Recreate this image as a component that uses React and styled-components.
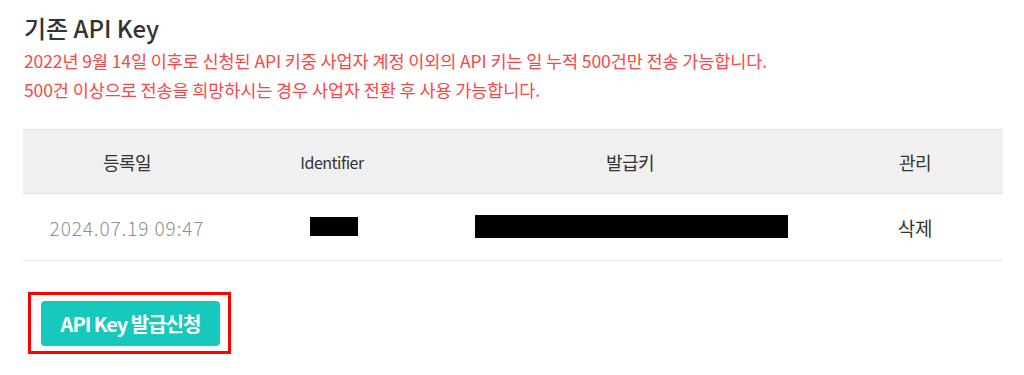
import React from 'react'
import styled, { createGlobalStyle } from 'styled-components'

const GlobalStyle = createGlobalStyle`
  body {
    margin: 0;
    background: #fff;
    font-family: "Noto Sans CJK KR", "Noto Sans", sans-serif;
  }
`

const Wrapper = styled.div`
  width: 980px;
  padding: 12px 0 0 23px;
`

const Title = styled.h2`
  margin: 0 0 0 1px;
  font-size: 24px;
  font-weight: 500;
  line-height: 32px;
  color: #333;
  letter-spacing: 0;
`

const Notice = styled.p`
  margin: 2px 0 0 1px;
  font-size: 17.5px;
  line-height: 29px;
  color: #fa4646;
  letter-spacing: -0.1px;
`

const Table = styled.table`
  width: 980px;
  margin-top: 25px;
  border-collapse: collapse;
  table-layout: fixed;
`

const HeadCell = styled.th`
  width: ${p => p.$w}px;
  height: 63px;
  padding: 0;
  background: #f0f0f0;
  border-top: 1px solid #e4e4e4;
  border-bottom: 1px solid #e4e4e4;
  font-size: ${p => (p.$latin ? 16 : 18)}px;
  font-weight: 400;
  color: #333;
  letter-spacing: -0.5px;
`

const Cell = styled.td`
  height: 66px;
  padding: 0;
  text-align: center;
  border-bottom: 1px solid #e4e4e4;
  font-size: 19px;
  font-weight: ${p => (p.$muted ? 300 : 400)};
  color: ${p => (p.$muted ? '#8f8f8f' : '#333')};
  letter-spacing: ${p => (p.$muted ? '0.9px' : '-0.3px')};
`

const Mask = styled.div`
  width: ${p => p.$w}px;
  height: ${p => p.$h}px;
  margin: -1px auto 0;
  background: #000;
  transform: translateX(${p => p.$shift || 0}px);
`

const Highlight = styled.div`
  display: inline-block;
  margin: 31px 0 0 5px;
  padding: 6px 8px 5px 10px;
  border: 3px solid #ff0000;
`

const IssueButton = styled.button`
  width: 179px;
  height: 45px;
  border: none;
  border-radius: 4px;
  background: #17c9bd;
  color: #fff;
  font-family: inherit;
  font-size: 20px;
  font-weight: 700;
  letter-spacing: -1px;
  cursor: pointer;
`

export default function App() {
  return (
    <>
      <GlobalStyle />
      <Wrapper>
        <Title>기존 API Key</Title>
        <Notice>
          2022년 9월 14일 이후로 신청된 API 키중 사업자 계정 이외의 API 키는 일 누적 500건만 전송 가능합니다.
          <br />
          500건 이상으로 전송을 희망하시는 경우 사업자 전환 후 사용 가능합니다.
        </Notice>
        <Table>
          <thead>
            <tr>
              <HeadCell $w={208}>등록일</HeadCell>
              <HeadCell $w={202} $latin>Identifier</HeadCell>
              <HeadCell $w={394}>발급키</HeadCell>
              <HeadCell $w={176}>관리</HeadCell>
            </tr>
          </thead>
          <tbody>
            <tr>
              <Cell $muted>2024.07.19 09:47</Cell>
              <Cell><Mask $w={48} $h={19} $shift={2} /></Cell>
              <Cell><Mask $w={313} $h={23} $shift={1} /></Cell>
              <Cell>삭제</Cell>
            </tr>
          </tbody>
        </Table>
        <Highlight>
          <IssueButton>API Key 발급신청</IssueButton>
        </Highlight>
      </Wrapper>
    </>
  )
}
